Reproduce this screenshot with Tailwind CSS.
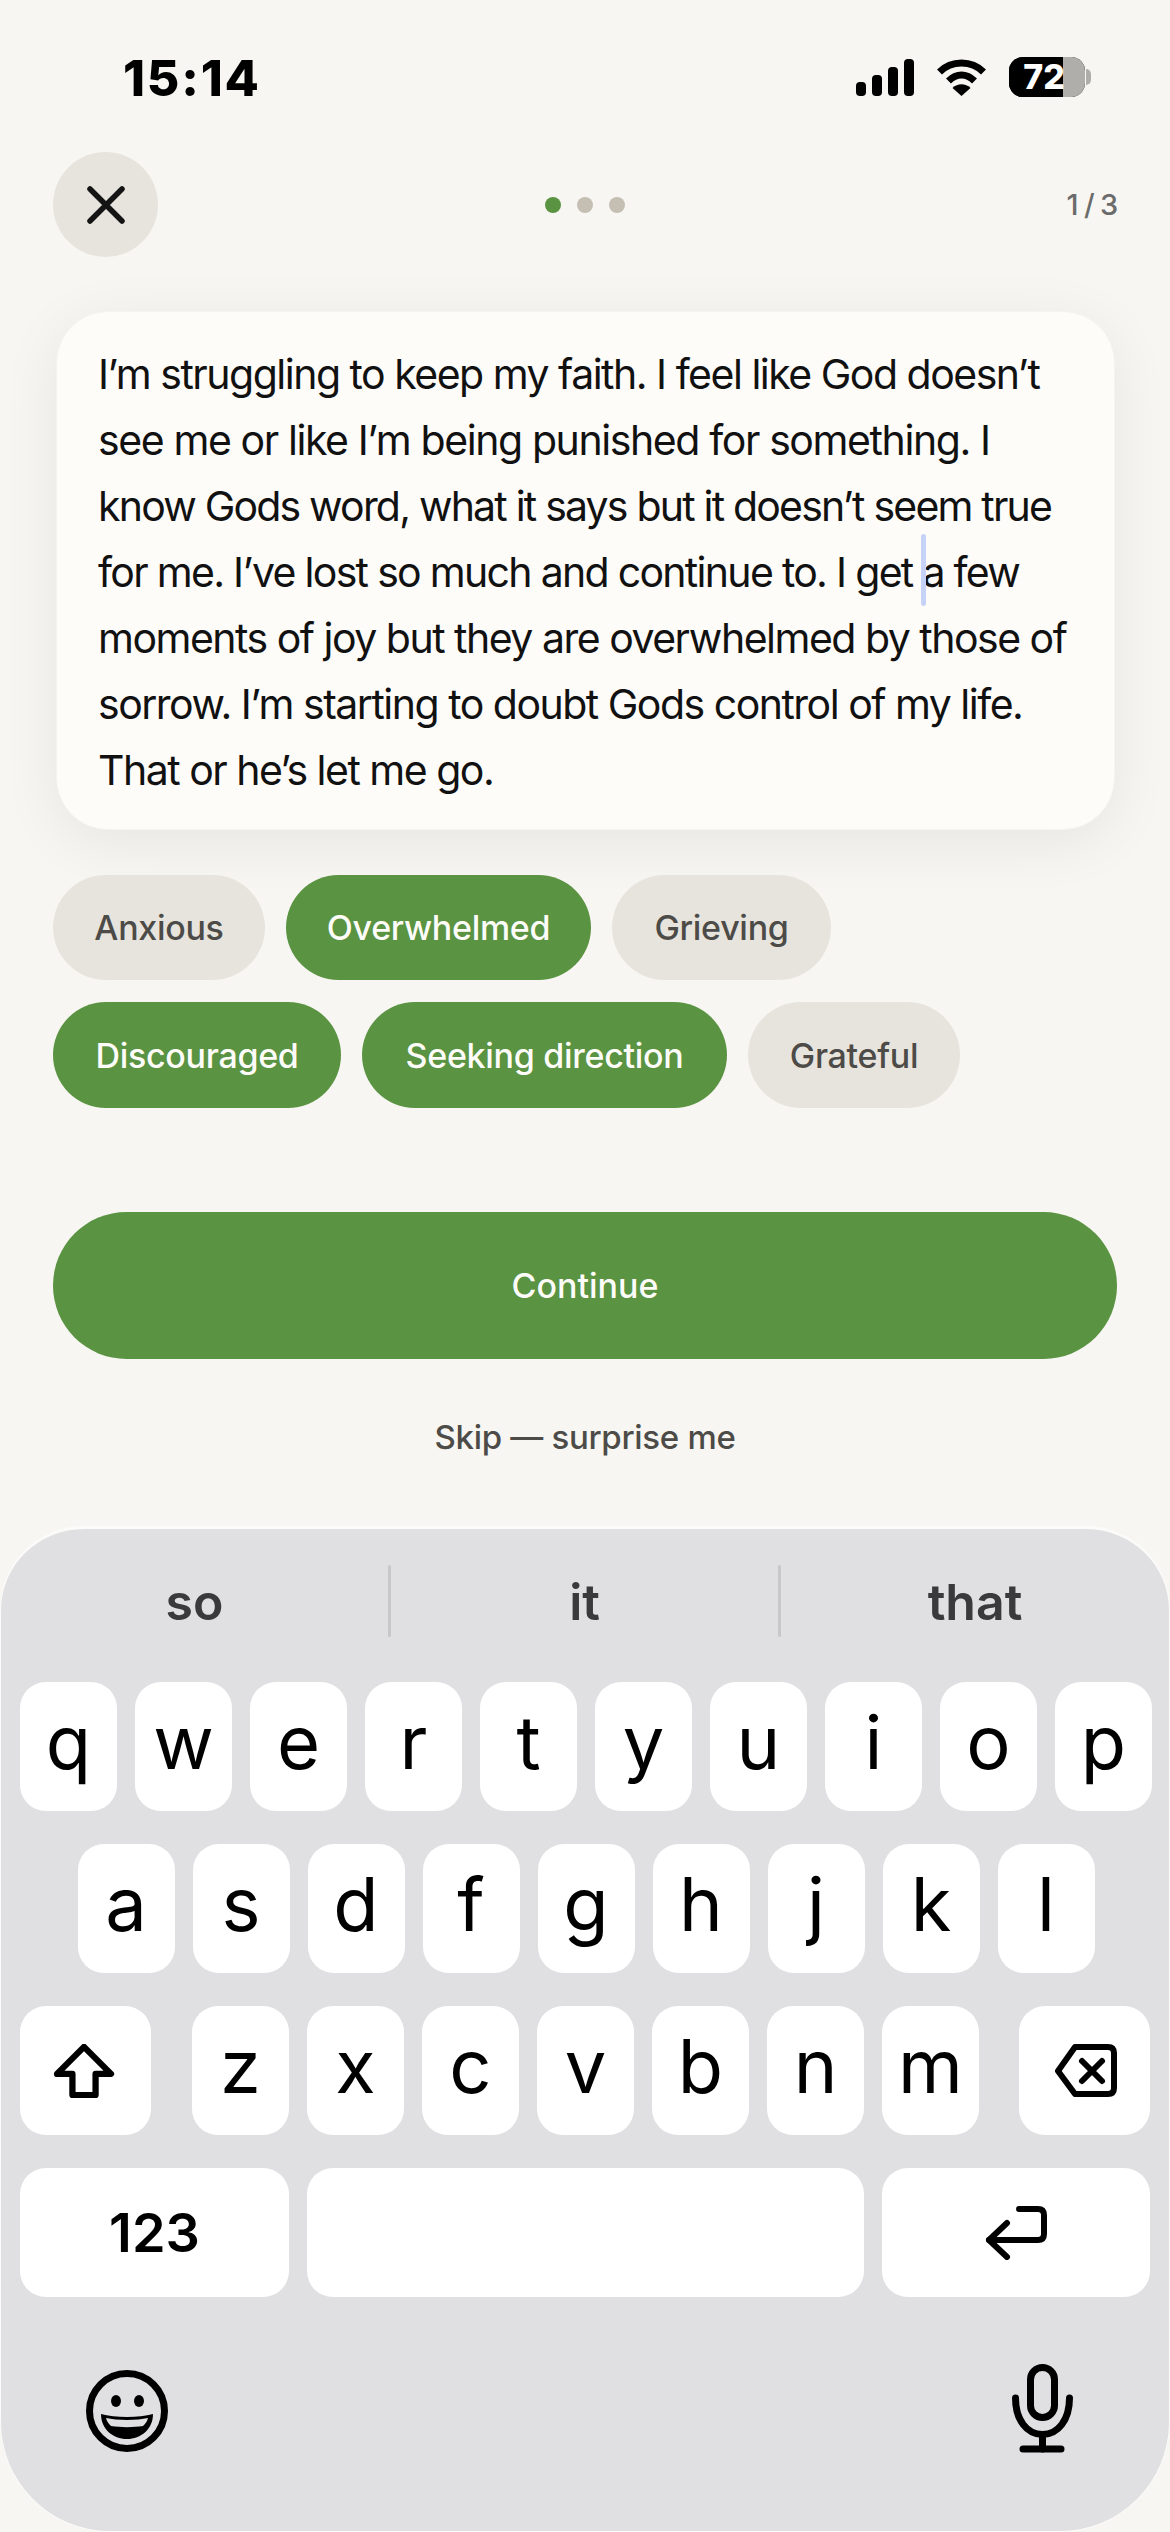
<!DOCTYPE html>
<html>
<head>
<meta charset="utf-8">
<script src="https://cdn.jsdelivr.net/npm/@tailwindcss/browser@4"></script>
</head>
<body class="m-0">
<div class="relative w-[1170px] h-[2532px] overflow-hidden bg-[#f7f6f2] font-['Inter',sans-serif] flex flex-col">
  <!-- status -->
  <div class="h-[152px] flex items-start justify-between shrink-0">
    <div class="ml-[123px] mt-[48px] text-[50px] leading-[60px] font-extrabold text-black tracking-[1.8px]">15:14</div>
    <div class="mr-[79px] mt-[57px] flex items-center gap-[22px]">
      <svg class="w-[58px] h-[37px]" viewBox="0 0 58 37" fill="#000"><rect x="0" y="23" width="10" height="14" rx="4"/><rect x="16" y="16" width="10" height="21" rx="4"/><rect x="32" y="8" width="10" height="29" rx="4"/><rect x="48" y="0" width="10" height="37" rx="4"/></svg>
      <svg class="w-[51px] h-[37px]" viewBox="0 0 50 37" fill="none" stroke="#000" stroke-width="7"><path d="M3 13 C15 1 35 1 47 13"/><path d="M12 22 C20 14 30 14 38 22"/><path d="M25 37 L16 29 C21 24 29 24 34 29 Z" fill="#000" stroke="none"/></svg>
      <div class="flex items-center">
        <div class="relative w-[76px] h-[40px] rounded-[14px] overflow-hidden bg-black flex">
          <div class="w-[54px] h-full bg-black"></div>
          <div class="flex-1 h-full bg-[#afaeaa]"></div>
          <div class="absolute inset-0 flex items-center justify-center text-white font-extrabold text-[34px] leading-none pr-[6px]">72</div>
        </div>
        <div class="w-[5px] h-[16px] ml-[1px] rounded-r-full bg-[#afaeaa]"></div>
      </div>
    </div>
  </div>
  <!-- nav -->
  <div class="h-[105px] mx-[53px] grid grid-cols-[105px_1fr_105px] items-center shrink-0">
    <div class="w-[105px] h-[105px] rounded-full bg-[#e7e4dd] flex items-center justify-center">
      <svg class="w-[38px] h-[38px]" viewBox="0 0 38 38" fill="none" stroke="#141414" stroke-width="5.5" stroke-linecap="round"><path d="M3 3 L35 35 M35 3 L3 35"/></svg>
    </div>
    <div class="flex items-center justify-center gap-[16px]">
      <div class="w-[16px] h-[16px] rounded-full bg-[#5a9341]"></div>
      <div class="w-[16px] h-[16px] rounded-full bg-[#c4bfb2]"></div>
      <div class="w-[16px] h-[16px] rounded-full bg-[#c4bfb2]"></div>
    </div>
    <div class="text-right text-[29px] font-medium text-[#6b6b6b] tracking-[-1.2px]">1 / 3</div>
  </div>
  <!-- card -->
  <div class="mt-[54px] ml-[56px] w-[1059px] h-[519px] rounded-[52px] bg-[#fdfcf9] shadow-[0_12px_60px_rgba(0,0,0,0.07)] border border-[#f5f4f0] shrink-0 pl-[41px] pt-[29px] text-[41px] leading-[66px] text-[#111] tracking-[-1.5px] whitespace-nowrap">
    <div>I’m struggling to keep my faith. I feel like God doesn’t</div>
    <div class="tracking-[-1.4px]">see me or like I’m being punished for something. I</div>
    <div class="tracking-[-1.8px]">know Gods word, what it says but it doesn’t seem true</div>
    <div class="tracking-[-1.7px]">for me. I’ve lost so much and continue to. I get <span class="relative">a<span class="absolute left-[-1px] top-[-13px] w-[5px] h-[72px] rounded-full bg-[#c7d2f7]"></span></span> few</div>
    <div>moments of joy but they are overwhelmed by those of</div>
    <div>sorrow. I’m starting to doubt Gods control of my life.</div>
    <div>That or he’s let me go.</div>
  </div>
  <!-- chips -->
  <div class="mt-[45px] ml-[53px] flex gap-[21px] shrink-0 text-[34px] font-medium tracking-[-0.3px]">
    <div class="w-[212px] h-[105px] rounded-full bg-[#e7e4dd] text-[#4d4b48] flex items-center justify-center">Anxious</div>
    <div class="w-[305px] h-[105px] rounded-full bg-[#5a9341] text-[#fdfcf9] flex items-center justify-center">Overwhelmed</div>
    <div class="w-[219px] h-[105px] rounded-full bg-[#e7e4dd] text-[#4d4b48] flex items-center justify-center">Grieving</div>
  </div>
  <div class="mt-[22px] ml-[53px] flex gap-[21px] shrink-0 text-[34px] font-medium tracking-[-0.3px]">
    <div class="w-[288px] h-[106px] rounded-full bg-[#5a9341] text-[#fdfcf9] flex items-center justify-center">Discouraged</div>
    <div class="w-[365px] h-[106px] rounded-full bg-[#5a9341] text-[#fdfcf9] flex items-center justify-center">Seeking direction</div>
    <div class="w-[212px] h-[106px] rounded-full bg-[#e7e4dd] text-[#4d4b48] flex items-center justify-center">Grateful</div>
  </div>
  <!-- continue -->
  <div class="mt-[104px] mx-[53px] h-[147px] rounded-full bg-[#5a9341] text-[#fdfcf9] text-[34px] font-medium flex items-center justify-center shrink-0">Continue</div>
  <div class="mt-[56px] h-[45px] flex items-center justify-center text-[33px] font-medium text-[#4d4b48] tracking-[-0.3px] shrink-0">Skip — surprise me</div>
  <!-- keyboard -->
  <div class="absolute left-0 right-0 top-[1526px] h-[1006px] rounded-t-[84px] rounded-b-[110px] bg-[#e0e0e3] border-t-[3px] border-x-[1px] border-b-[1px] border-[#fbfbf9] overflow-hidden">
    <div class="h-[153px] flex items-start pt-[36px] text-[50px] font-semibold text-[#3a3a3c]">
      <div class="w-[387px] h-[74px] flex items-center justify-center">so</div>
      <div class="w-[3px] h-[72px] bg-[#c8c8cb] rounded-full"></div>
      <div class="w-[387px] h-[74px] flex items-center justify-center">it</div>
      <div class="w-[3px] h-[72px] bg-[#c8c8cb] rounded-full"></div>
      <div class="flex-1 h-[74px] flex items-center justify-center">that</div>
    </div>
    <div class="flex flex-col gap-[33px] text-[74px] leading-none text-black">
      <div class="flex justify-center gap-[18px] pl-[2px]">
        <div class="w-[97px] h-[129px] rounded-[26px] bg-white flex items-center justify-center pb-[10px]">q</div>
        <div class="w-[97px] h-[129px] rounded-[26px] bg-white flex items-center justify-center pb-[10px]">w</div>
        <div class="w-[97px] h-[129px] rounded-[26px] bg-white flex items-center justify-center pb-[10px]">e</div>
        <div class="w-[97px] h-[129px] rounded-[26px] bg-white flex items-center justify-center pb-[10px]">r</div>
        <div class="w-[97px] h-[129px] rounded-[26px] bg-white flex items-center justify-center pb-[10px]">t</div>
        <div class="w-[97px] h-[129px] rounded-[26px] bg-white flex items-center justify-center pb-[10px]">y</div>
        <div class="w-[97px] h-[129px] rounded-[26px] bg-white flex items-center justify-center pb-[10px]">u</div>
        <div class="w-[97px] h-[129px] rounded-[26px] bg-white flex items-center justify-center pb-[10px]">i</div>
        <div class="w-[97px] h-[129px] rounded-[26px] bg-white flex items-center justify-center pb-[10px]">o</div>
        <div class="w-[97px] h-[129px] rounded-[26px] bg-white flex items-center justify-center pb-[10px]">p</div>
      </div>
      <div class="flex justify-center gap-[18px] pl-[2px]">
        <div class="w-[97px] h-[129px] rounded-[26px] bg-white flex items-center justify-center pb-[10px]">a</div>
        <div class="w-[97px] h-[129px] rounded-[26px] bg-white flex items-center justify-center pb-[10px]">s</div>
        <div class="w-[97px] h-[129px] rounded-[26px] bg-white flex items-center justify-center pb-[10px]">d</div>
        <div class="w-[97px] h-[129px] rounded-[26px] bg-white flex items-center justify-center pb-[10px]">f</div>
        <div class="w-[97px] h-[129px] rounded-[26px] bg-white flex items-center justify-center pb-[10px]">g</div>
        <div class="w-[97px] h-[129px] rounded-[26px] bg-white flex items-center justify-center pb-[10px]">h</div>
        <div class="w-[97px] h-[129px] rounded-[26px] bg-white flex items-center justify-center pb-[10px]">j</div>
        <div class="w-[97px] h-[129px] rounded-[26px] bg-white flex items-center justify-center pb-[10px]">k</div>
        <div class="w-[97px] h-[129px] rounded-[26px] bg-white flex items-center justify-center pb-[10px]">l</div>
      </div>
      <div class="flex pl-[19px] gap-[18px]">
        <div class="w-[131px] h-[129px] rounded-[26px] bg-white flex items-center justify-center mr-[23px] pr-[4px]">
          <svg class="w-[62px] h-[54px]" viewBox="0 0 64 56" fill="none" stroke="#000" stroke-width="6.5" stroke-linejoin="round"><path d="M32 3 L60 31 L44 31 L44 53 L20 53 L20 31 L4 31 Z"/></svg>
        </div>
        <div class="w-[97px] h-[129px] rounded-[26px] bg-white flex items-center justify-center pb-[10px]">z</div>
        <div class="w-[97px] h-[129px] rounded-[26px] bg-white flex items-center justify-center pb-[10px]">x</div>
        <div class="w-[97px] h-[129px] rounded-[26px] bg-white flex items-center justify-center pb-[10px]">c</div>
        <div class="w-[97px] h-[129px] rounded-[26px] bg-white flex items-center justify-center pb-[10px]">v</div>
        <div class="w-[97px] h-[129px] rounded-[26px] bg-white flex items-center justify-center pb-[10px]">b</div>
        <div class="w-[97px] h-[129px] rounded-[26px] bg-white flex items-center justify-center pb-[10px]">n</div>
        <div class="w-[97px] h-[129px] rounded-[26px] bg-white flex items-center justify-center pb-[10px]">m</div>
        <div class="w-[131px] h-[129px] rounded-[26px] bg-white flex items-center justify-center ml-[22px] pl-[2px]">
          <svg class="w-[62px] h-[53px]" viewBox="0 0 62 53" fill="none" stroke="#000" stroke-width="6" stroke-linejoin="round" stroke-linecap="round"><path d="M20 3 L53 3 Q59 3 59 9 L59 44 Q59 50 53 50 L20 50 L3 27 Z"/><path d="M27 17 L47 37 M47 17 L27 37"/></svg>
        </div>
      </div>
      <div class="flex pl-[19px] gap-[18px]">
        <div class="w-[269px] h-[129px] rounded-[26px] bg-white flex items-center justify-center text-[54px] font-semibold">123</div>
        <div class="w-[557px] h-[129px] rounded-[26px] bg-white"></div>
        <div class="w-[268px] h-[129px] rounded-[26px] bg-white flex items-center justify-center">
          <svg class="w-[62px] h-[54px]" viewBox="0 0 62 54" fill="none" stroke="#000" stroke-width="6" stroke-linejoin="round" stroke-linecap="round"><path d="M34 3 L53 3 Q59 3 59 9 L59 28 Q59 34 53 34 L4 34"/><path d="M22 17 L4 34 L22 51"/></svg>
        </div>
      </div>
    </div>
    <div class="mt-[67px] flex items-end justify-between pl-[84px] pr-[96px]">
      <svg class="w-[84px] h-[84px]" viewBox="0 0 84 84" fill="none"><circle cx="42" cy="42" r="37.5" stroke="#000" stroke-width="7"/><ellipse cx="31" cy="32" rx="5" ry="6" fill="#000"/><ellipse cx="54" cy="32" rx="5" ry="6" fill="#000"/><path d="M16 45 C30 49 54 49 68 45 C68 60 56 70 42 70 C28 70 16 60 16 45 Z" fill="#000"/><path d="M21 49 C32 51.5 52 51.5 63 49 C62 53 60 55 58 57 C48 58.5 36 58.5 26 57 C24 55 22 53 21 49 Z" fill="#e0e0e3"/></svg>
      <svg class="w-[61px] h-[89px]" viewBox="0 0 61 89" fill="none" stroke="#000" stroke-width="7" stroke-linecap="round"><rect x="18.5" y="3.5" width="24" height="50" rx="12"/><path d="M3.5 34 C3.5 56 15 70.5 30.5 70.5 C46 70.5 57.5 56 57.5 34"/><path d="M30.5 70.5 L30.5 85"/><path d="M11 85 L49 85"/></svg>
    </div>
  </div>
</div>
</body>
</html>
